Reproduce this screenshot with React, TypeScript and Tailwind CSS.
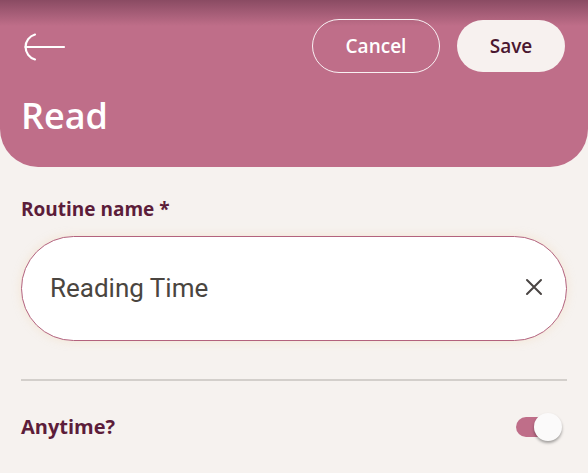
import React from "react"

function BackArrow() {
  return (
    <svg width="42" height="28" viewBox="0 0 42 28" fill="none" className="block">
      <path d="M11 1.5 A13 13 0 0 0 11 26.5" stroke="white" strokeWidth="2.2" strokeLinecap="round" />
      <path d="M1.5 14 H40" stroke="white" strokeWidth="2.2" strokeLinecap="round" />
    </svg>
  )
}

function ClearIcon() {
  return (
    <svg width="18" height="18" viewBox="0 0 18 18" fill="none" className="block">
      <path d="M2 2 L16 16 M16 2 L2 16" stroke="#4a4543" strokeWidth="2" strokeLinecap="round" />
    </svg>
  )
}

export default function App() {
  return (
    <div className="w-[588px] h-[473px] overflow-hidden bg-[#f6f2ef] font-['Open_Sans',sans-serif]">
      <header className="relative h-[167px] rounded-b-[38px] bg-[#bf6e89] px-[21px] pt-[19px]">
        <div className="absolute inset-x-0 top-0 h-[26px] bg-gradient-to-b from-[#8a4b63] to-[#bf6e89]/0" />
        <div className="relative flex h-[54px] items-center justify-between">
          <div className="pl-[3px] pt-[1px]">
            <BackArrow />
          </div>
          <div className="flex items-center gap-[17px] pr-[2px]">
            <button className="h-[54px] w-[128px] rounded-full border-[1.5px] border-white/90 text-[19px] font-semibold text-white">
              Cancel
            </button>
            <button className="h-[52px] w-[108px] rounded-full bg-[#f7f1ef] text-[19px] font-semibold text-[#4a1730]">
              Save
            </button>
          </div>
        </div>
        <h1 className="relative mt-[20px] text-[36px] leading-[46px] font-semibold text-white">Read</h1>
      </header>

      <main className="px-[21px] pt-[30px]">
        <label className="block text-[19px] leading-[24px] font-bold text-[#5c1d3a]">Routine name *</label>
        <div className="mt-[15px] flex h-[105px] items-center justify-between rounded-full border border-[#b3627e] bg-white pl-[28px] pr-[23px] shadow-[0_0_10px_rgba(240,205,160,0.35)]">
          <span className="font-['Roboto',sans-serif] text-[26px] text-[#4a4540]">Reading Time</span>
          <div className="-mt-[4px]">
            <ClearIcon />
          </div>
        </div>

        <div className="mt-[38px] h-[2px] bg-[#d3cfcb]" />

        <div className="mt-[32px] flex items-center justify-between">
          <span className="text-[20px] leading-[28px] font-bold text-[#5c1d3a]">Anytime?</span>
          <div className="relative mr-[15px] h-[20px] w-[36px] rounded-full bg-[#bf6e89]">
            <div className="absolute right-[-10px] top-[-4px] h-[28px] w-[28px] rounded-full bg-[#fbfafa] shadow-[0_2px_3px_rgba(0,0,0,0.35)]" />
          </div>
        </div>
      </main>
    </div>
  )
}
